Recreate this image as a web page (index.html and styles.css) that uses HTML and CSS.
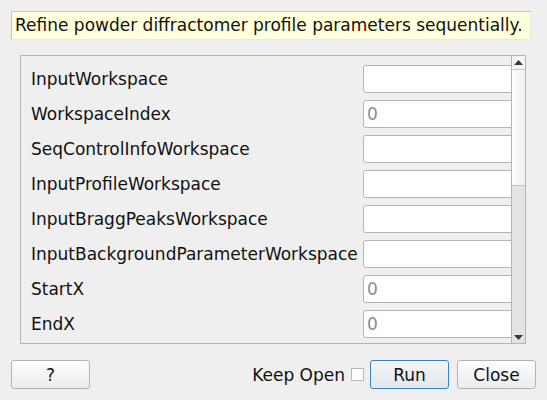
FILE: index.html
```html
<!DOCTYPE html>
<html>
<head>
<meta charset="utf-8">
<link rel="stylesheet" href="styles.css">
</head>
<body>
<div class="dialog">
  <div class="desc">Refine powder diffractomer profile parameters sequentially.</div>
  <div class="frame">
    <div class="content">
      <div class="row"><span class="label">InputWorkspace</span><span class="field"></span></div>
      <div class="row"><span class="label">WorkspaceIndex</span><span class="field">0</span></div>
      <div class="row"><span class="label">SeqControlInfoWorkspace</span><span class="field"></span></div>
      <div class="row"><span class="label">InputProfileWorkspace</span><span class="field"></span></div>
      <div class="row"><span class="label">InputBraggPeaksWorkspace</span><span class="field"></span></div>
      <div class="row"><span class="label">InputBackgroundParameterWorkspace</span><span class="field"></span></div>
      <div class="row"><span class="label">StartX</span><span class="field">0</span></div>
      <div class="row"><span class="label">EndX</span><span class="field">0</span></div>
    </div>
    <div class="scrollbar">
      <div class="arrow up"><svg width="9" height="5" viewBox="0 0 9 5"><polygon points="0,5 4.5,0 9,5" fill="#3a3a3a"/></svg></div>
      <div class="handle"></div>
      <div class="trough"></div>
      <div class="arrow down"><svg width="9" height="5" viewBox="0 0 9 5"><polygon points="0,0 4.5,5 9,0" fill="#3a3a3a"/></svg></div>
    </div>
  </div>
  <div class="buttons">
    <button class="btn help">?</button>
    <div class="spacer"></div>
    <label class="keep">Keep Open <span class="check"></span></label>
    <button class="btn run">Run</button>
    <button class="btn">Close</button>
  </div>
</div>
</body>
</html>
```
FILE: styles.css
```css
html, body {
  margin: 0;
  padding: 0;
  background: #efefef;
  font-family: "DejaVu Sans", sans-serif;
  color: #111;
}
.dialog {
  width: 547px;
  height: 400px;
  box-sizing: border-box;
  padding: 11px 11px 0 11px;
  display: flex;
  flex-direction: column;
}
.desc {
  width: 520px;
  height: 29px;
  box-sizing: border-box;
  background: #ffffdc;
  border: 1px solid #c4c4c4;
  border-right-color: #e8e8e8;
  border-bottom-color: #e8e8e8;
  font-size: 17px;
  line-height: 26px;
  padding-left: 3px;
  white-space: nowrap;
  overflow: hidden;
}
.frame {
  margin-top: 15px;
  margin-left: 9px;
  width: 506px;
  height: 289px;
  box-sizing: border-box;
  border: 1px solid #b5b5b5;
  display: flex;
  overflow: hidden;
}
.content {
  flex: 1;
  overflow: hidden;
  padding: 9px 0 0 10px;
  display: flex;
  flex-direction: column;
  gap: 7px;
}
.row {
  display: flex;
  align-items: center;
  height: 28px;
  flex: none;
}
.label {
  width: 332px;
  flex: none;
  font-size: 17px;
  white-space: nowrap;
}
.field {
  flex: none;
  width: 170px;
  height: 28px;
  box-sizing: border-box;
  background: #fff;
  border: 1px solid #b4b4b4;
  border-radius: 3px;
  font-size: 17px;
  color: #8c8c8c;
  line-height: 26px;
  padding-left: 3px;
}
.scrollbar {
  width: 14px;
  flex: none;
  box-sizing: border-box;
  border-left: 1px solid #b5b5b5;
  display: flex;
  flex-direction: column;
  background: #e3e3e3;
}
.arrow {
  height: 14px;
  flex: none;
  display: flex;
  align-items: center;
  justify-content: center;
}
.arrow.up {
  background: #f5f5f5;
  border-bottom: 1px solid #c8c8c8;
  height: 13px;
}
.arrow.down {
  height: 12px;
}
.handle {
  height: 116px;
  flex: none;
  box-sizing: border-box;
  background: linear-gradient(to right, #fdfdfd, #f0f0f0);
  border-bottom: 1px solid #c0c0c0;
}
.trough {
  flex: 1;
}
.buttons {
  margin-top: 16px;
  display: flex;
  align-items: center;
  height: 29px;
}
.btn {
  width: 79px;
  height: 29px;
  box-sizing: border-box;
  border: 1px solid #b4b4b4;
  border-radius: 3px;
  background: linear-gradient(to bottom, #fdfdfd, #ececec);
  font-family: "DejaVu Sans", sans-serif;
  font-size: 17px;
  color: #111;
  padding: 0;
  margin: 0;
}
.spacer { flex: 1; }
.keep {
  display: flex;
  align-items: center;
  font-size: 17px;
  margin-right: 6px;
}
.check {
  display: inline-block;
  width: 13px;
  height: 13px;
  box-sizing: border-box;
  border: 1px solid #b8b8b8;
  background: #fff;
  margin-left: 6px;
}
.run {
  border-color: #3f7fbf;
  background: linear-gradient(to bottom, #f2f6fa, #e1e8ef);
  margin-right: 8px;
}
```
